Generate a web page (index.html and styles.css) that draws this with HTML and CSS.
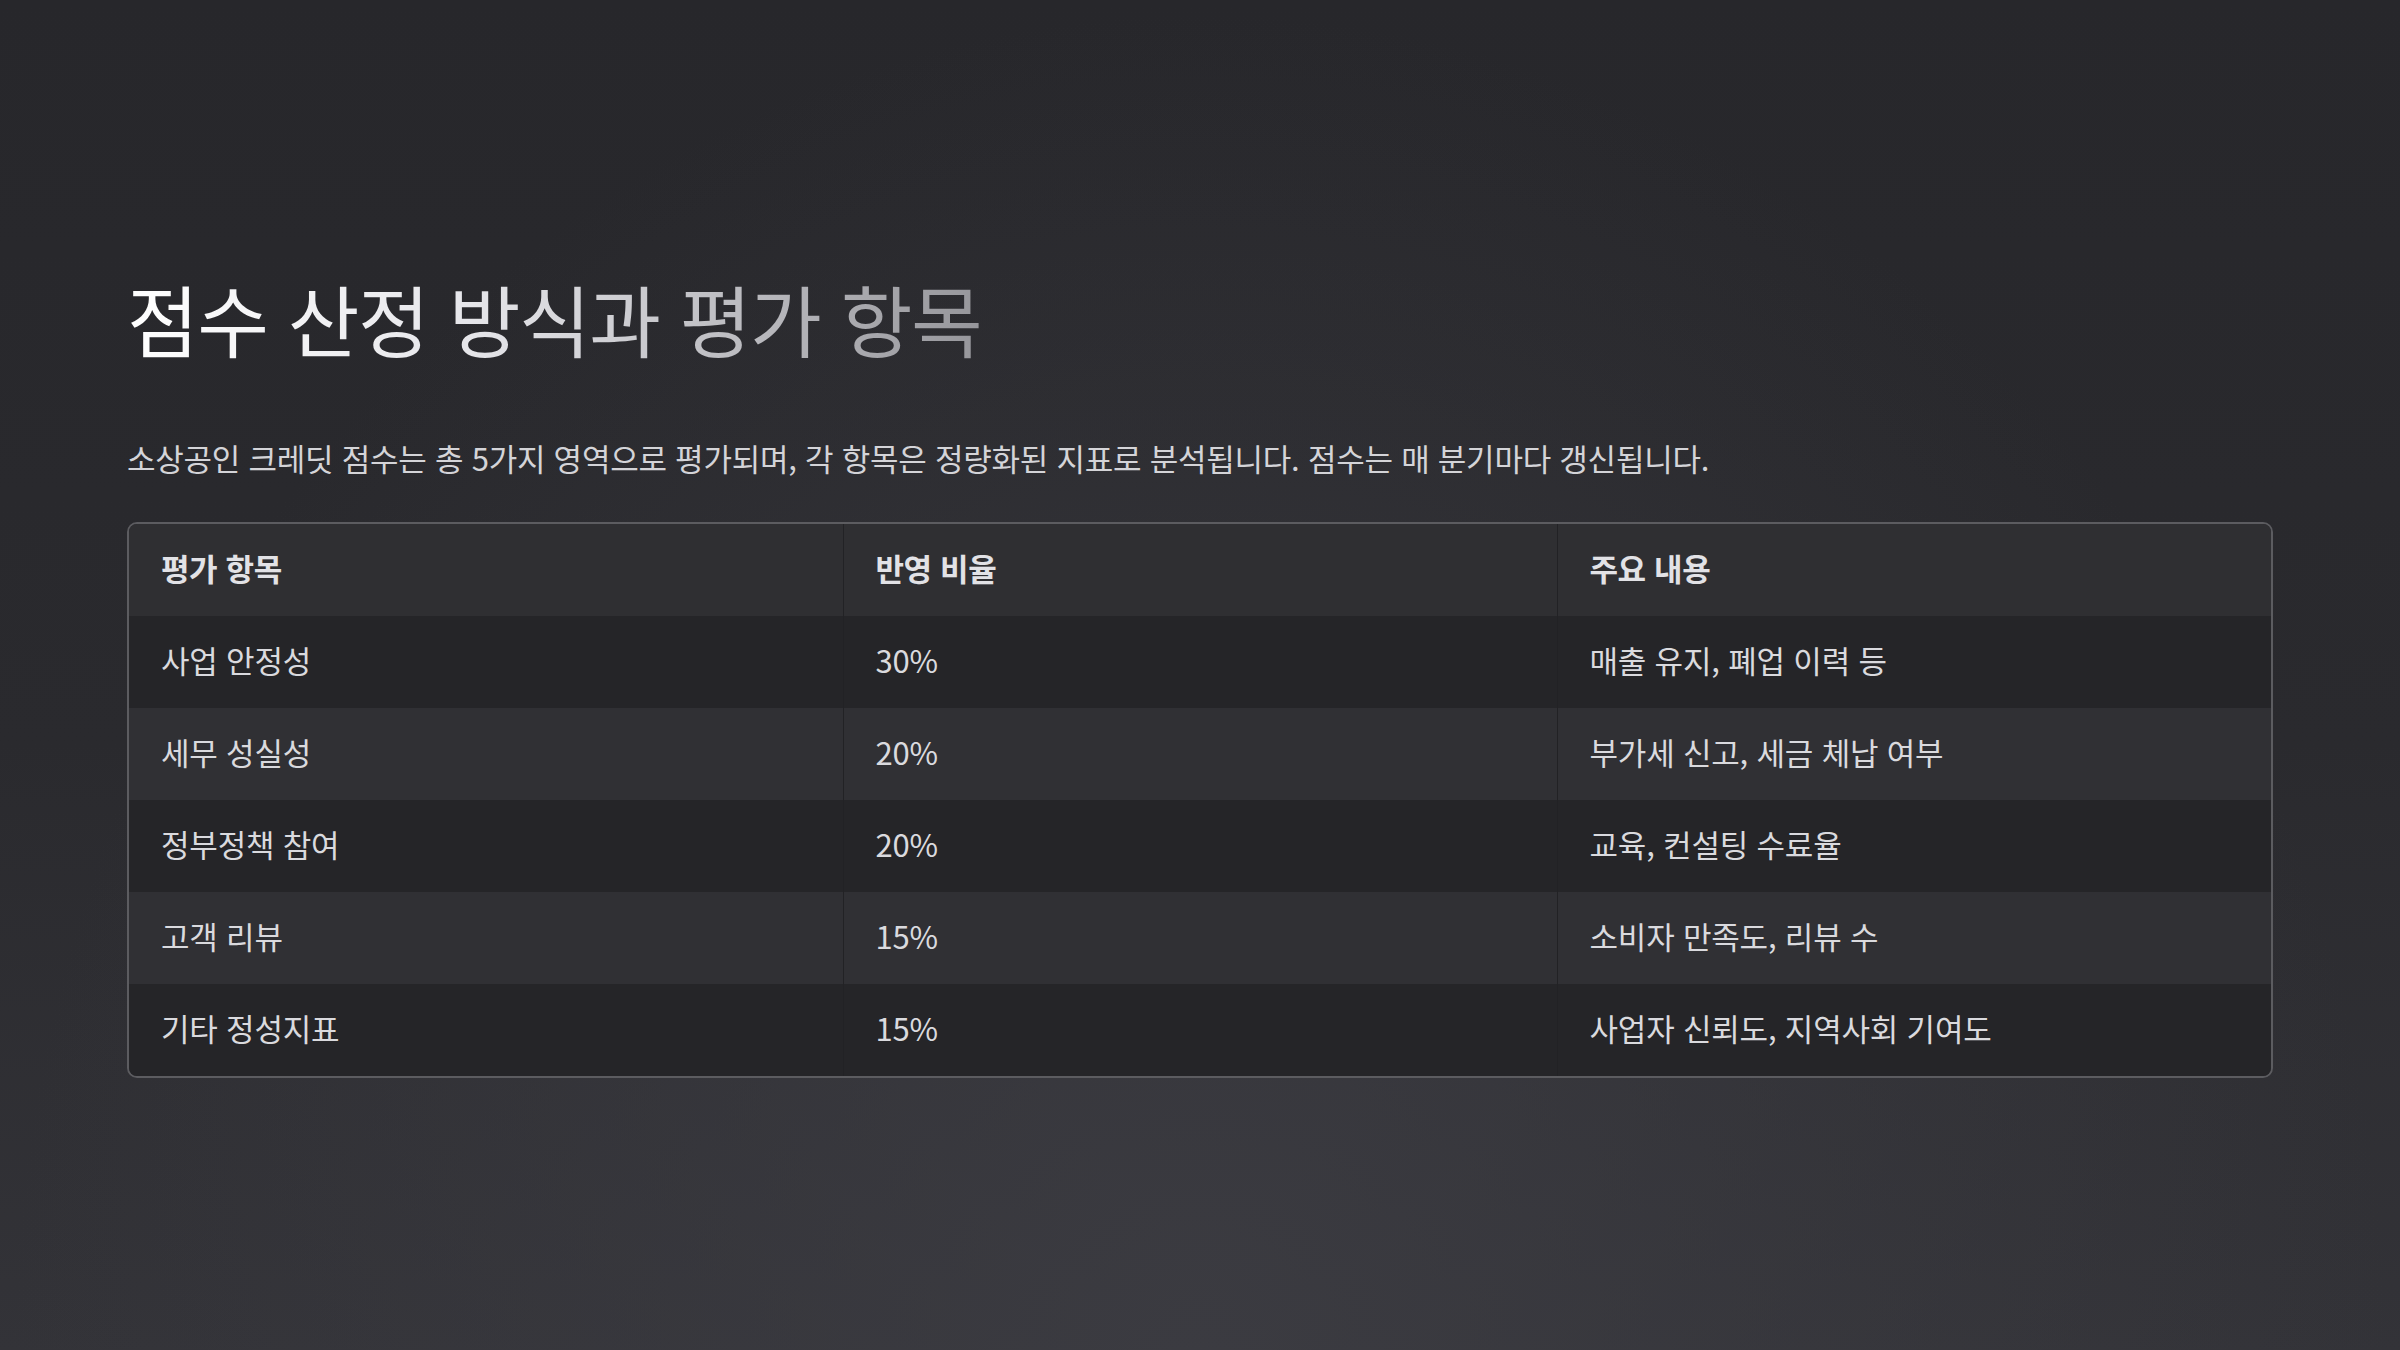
FILE: index.html
```html
<!DOCTYPE html>
<html lang="ko">
<head>
    <meta charset="UTF-8">
    <meta name="viewport" content="width=device-width, initial-scale=1.0">
    <title>점수 산정 방식과 평가 항목</title>
    <link rel="stylesheet" href="styles.css">
</head>
<body>
    <div class="slide">
        <h1 class="title">점수 산정 방식과 평가 항목</h1>
        <p class="lead">소상공인 크레딧 점수는 총 5가지 영역으로 평가되며, 각 항목은 정량화된 지표로 분석됩니다. 점수는 매 분기마다 갱신됩니다.</p>

        <div class="table-wrap">
            <table class="score-table">
                <thead>
                    <tr>
                        <th>평가 항목</th>
                        <th>반영 비율</th>
                        <th>주요 내용</th>
                    </tr>
                </thead>
                <tbody>
                    <tr>
                        <td>사업 안정성</td>
                        <td>30%</td>
                        <td>매출 유지, 폐업 이력 등</td>
                    </tr>
                    <tr>
                        <td>세무 성실성</td>
                        <td>20%</td>
                        <td>부가세 신고, 세금 체납 여부</td>
                    </tr>
                    <tr>
                        <td>정부정책 참여</td>
                        <td>20%</td>
                        <td>교육, 컨설팅 수료율</td>
                    </tr>
                    <tr>
                        <td>고객 리뷰</td>
                        <td>15%</td>
                        <td>소비자 만족도, 리뷰 수</td>
                    </tr>
                    <tr>
                        <td>기타 정성지표</td>
                        <td>15%</td>
                        <td>사업자 신뢰도, 지역사회 기여도</td>
                    </tr>
                </tbody>
            </table>
        </div>
    </div>
</body>
</html>
```

FILE: styles.css
```css
body {
    margin: 0;
    min-height: 100vh;
    font-family: "Noto Sans CJK KR", "Noto Sans", sans-serif;
    color: #dcdce0;
    background-color: #2a2a2e;
    background-image:
        radial-gradient(ellipse at 50% 100%, rgba(60, 60, 66, 0.9) 0%, rgba(60, 60, 66, 0) 70%),
        linear-gradient(180deg, #27272b 0%, #2a2a2e 55%, #333338 100%);
}

.slide {
    min-height: 100vh;
    box-sizing: border-box;
    padding: 0 127px;
    display: flex;
    flex-direction: column;
    justify-content: center;
}

.title {
    margin: 0;
    font-size: 78px;
    font-weight: 400;
    line-height: 1.2;
    letter-spacing: -1.5px;
    background: linear-gradient(90deg, #ffffff 0%, #e6e6ea 40%, #96969b 100%);
    -webkit-background-clip: text;
    background-clip: text;
    color: transparent;
    width: fit-content;
}

.lead {
    margin: 70px 0 43px;
    font-size: 31px;
    line-height: 1.4;
    letter-spacing: -0.25px;
    color: #d4d4d8;
}

.table-wrap {
    border: 2px solid #5c5c60;
    border-radius: 10px;
    overflow: hidden;
}

.score-table {
    width: 100%;
    border-collapse: collapse;
    table-layout: fixed;
}

.score-table th,
.score-table td {
    height: 92px;
    box-sizing: border-box;
    padding: 0 32px 5px;
    text-align: left;
    font-size: 31px;
    letter-spacing: -0.2px;
    border-left: 1px solid #222225;
}

.score-table th:first-child,
.score-table td:first-child {
    border-left: none;
}

.score-table th {
    font-weight: 700;
    letter-spacing: -0.4px;
    color: #e2e2e6;
    background: #2f2f32;
}

.score-table td {
    color: #dadade;
}

.score-table tbody tr:nth-child(odd) {
    background: #252528;
}

.score-table tbody tr:nth-child(even) {
    background: #303034;
}
```
